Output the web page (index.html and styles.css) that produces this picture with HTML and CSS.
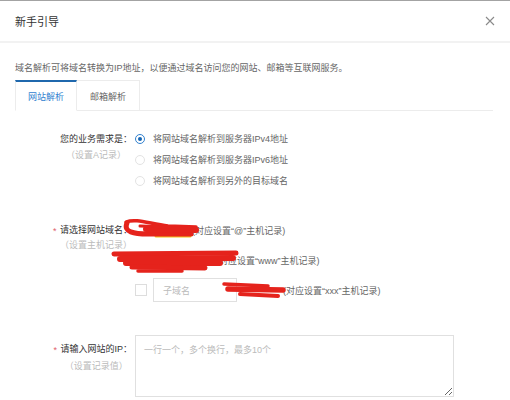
FILE: index.html
```html
<!DOCTYPE html>
<html lang="zh-CN">
<head>
<meta charset="utf-8">
<title>新手引导</title>
<link rel="stylesheet" href="styles.css">
</head>
<body>
<div class="page">
  <div class="header">
    <span class="title">新手引导</span>
    <svg class="close" width="10" height="10" viewBox="0 0 10 10"><path d="M1 1L9 9M9 1L1 9" stroke="#8a8a8a" stroke-width="1.1" fill="none"/></svg>
  </div>
  <div class="body">
    <p class="desc">域名解析可将域名转换为IP地址，以便通过域名访问您的网站、邮箱等互联网服务。</p>
    <div class="tabs">
      <div class="tab active">网站解析</div>
      <div class="tab">邮箱解析</div>
      <div class="tab-fill"></div>
    </div>

    <div class="row row-radio">
      <div class="label">
        <div class="lblbox">
          <div class="lbl">您的业务需求是：</div>
          <div class="sub">（设置A记录）</div>
        </div>
      </div>
      <div class="ctrl">
        <div class="opt"><span class="radio checked"></span>将网站域名解析到服务器IPv4地址</div>
        <div class="opt"><span class="radio"></span>将网站域名解析到服务器IPv6地址</div>
        <div class="opt"><span class="radio"></span>将网站域名解析到另外的目标域名</div>
      </div>
    </div>

    <div class="row row-domain">
      <div class="label">
        <div class="lblbox">
          <div class="lbl req">请选择网站域名：</div>
          <div class="sub">（设置主机记录）</div>
        </div>
      </div>
      <div class="ctrl">
        <div class="dline"><span class="note n1">(对应设置“@”主机记录)</span></div>
        <div class="dline"><span class="note n2">(对应设置“www”主机记录)</span></div>
        <div class="dline"><span class="check"></span><span class="sub-input">子域名</span><span class="note n3">(对应设置“xxx”主机记录)</span></div>
      </div>
    </div>

    <div class="row row-ip">
      <div class="label">
        <div class="lblbox">
          <div class="lbl req">请输入网站的IP：</div>
          <div class="sub">（设置记录值）</div>
        </div>
      </div>
      <div class="ctrl">
        <textarea class="ipbox" placeholder="一行一个，多个换行，最多10个"></textarea>
      </div>
    </div>
  </div>

  <svg class="scribbles" width="510" height="400" viewBox="0 0 510 400">
    <g fill="none" stroke="#e5231c" stroke-linecap="round" stroke-linejoin="round">
      <path d="M156,236 L190,236" stroke="#f2c21d" stroke-width="3"/>
      <path d="M126,222 C136,218 150,224 168,226 L196,227" stroke-width="3.5"/>
      <path d="M127,223 C123,232 134,234 148,234 L191,234" stroke-width="5"/>
      <path d="M146,229 L196,230" stroke-width="6"/>
      <path d="M140,226 L170,227" stroke-width="3"/>
      <path d="M114,254 L236,253" stroke-width="5"/>
      <path d="M120,259 L233,258" stroke-width="6"/>
      <path d="M126,263 L220,263" stroke-width="6"/>
      <path d="M132,267 L205,268" stroke-width="5"/>
      <path d="M138,271 L182,271" stroke-width="3.5"/>
      <path d="M224,284 L268,286" stroke-width="3.5"/>
      <path d="M228,289 L283,290" stroke-width="5.5"/>
      <path d="M240,294 L278,296" stroke-width="4"/>
    </g>
  </svg>
</div>
</body>
</html>
```
FILE: styles.css
```css
* { box-sizing: border-box; }
html, body { margin: 0; padding: 0; background: #fff; }
body {
  font-family: "Liberation Sans", "Noto Sans CJK SC", sans-serif;
  font-size: 9px;
  color: #333;
}
.page {
  position: relative;
  width: 510px;
  height: 400px;
  overflow: hidden;
  border-top: 1px solid #a3a3a3;
}
.header {
  height: 42px;
  display: flex;
  align-items: center;
  justify-content: space-between;
  padding: 0 15px 0 15px;
  border-bottom: 2px solid #f2f2f2;
}
.title { font-size: 11px; color: #333; }
.body { padding: 0 17px 0 15px; }
.desc {
  margin: 19px 0 0 0;
  line-height: 12px;
  color: #666;
}
.tabs {
  display: flex;
  margin-top: 6px;
  height: 31px;
}
.tab {
  height: 31px;
  display: flex;
  align-items: center;
  justify-content: center;
  color: #666;
  border: 1px solid #ececec;
  border-left: none;
  padding-top: 1px;
}
.tab:first-child { border-left: 1px solid #ececec; width: 62px; }
.tab:nth-child(2) { width: 63px; }
.tab.active {
  color: #3182d0;
  border-top: 2px solid #1f68ad;
  border-bottom-color: #fff;
}
.tab-fill { flex: 1; border-bottom: 1px solid #ececec; }

.row { display: flex; }
.label {
  width: 117px;
  display: flex;
  justify-content: flex-end;
}
.lblbox { text-align: center; }
.lbl { color: #333; line-height: 12px; position: relative; white-space: nowrap; }
.lbl.req::before {
  content: "*";
  position: absolute;
  left: -7px;
  top: 1px;
  color: #e0606a;
}
.sub { color: #bbb; line-height: 12px; white-space: nowrap; }
.ctrl { margin-left: 3px; }

.row-radio { margin-top: 17px; }
.row-radio .lblbox { padding-top: 5px; }
.row-radio .sub { margin-top: 4px; }
.opt {
  height: 21px;
  display: flex;
  align-items: center;
  color: #666;
}
.radio {
  width: 10px;
  height: 10px;
  border-radius: 50%;
  border: 1px solid #e3e3e3;
  margin-right: 8px;
  background: #fff;
  position: relative;
  flex: none;
}
.radio.checked { border-color: #2f80cf; }
.radio.checked::after {
  content: "";
  position: absolute;
  left: 2px;
  top: 2px;
  width: 4px;
  height: 4px;
  border-radius: 50%;
  background: #1665b3;
}

.row-domain { margin-top: 24px; }
.row-domain .lblbox { padding-top: 9px; }
.row-domain .sub { margin-top: 3px; }
.dline {
  height: 30px;
  display: flex;
  align-items: center;
  color: #666;
}
.note { white-space: nowrap; }
.n1 { margin-left: 57px; }
.n2 { margin-left: 81px; }
.n3 { margin-left: 46px; }
.check {
  width: 12px;
  height: 12px;
  border: 1px solid #ddd;
  background: #fff;
  margin-right: 6px;
  flex: none;
}
.sub-input {
  width: 84px;
  height: 24px;
  border: 1px solid #e0e0e0;
  display: flex;
  align-items: center;
  padding-left: 9px;
  color: #bbb;
}

.row-ip { margin-top: 30px; }
.row-ip .lblbox { padding-top: 8px; }
.row-ip .sub { margin-top: 5px; }
.ipbox {
  display: block;
  width: 319px;
  height: 62px;
  border: 1px solid #e0e0e0;
  padding: 7px 8px;
  font-family: "Liberation Sans", "Noto Sans CJK SC", sans-serif;
  font-size: 9px;
  color: #333;
  margin: 0;
  outline: none;
}
.ipbox::placeholder { color: #bbb; }

.scribbles {
  position: absolute;
  left: 0;
  top: -1px;
  pointer-events: none;
}
```
